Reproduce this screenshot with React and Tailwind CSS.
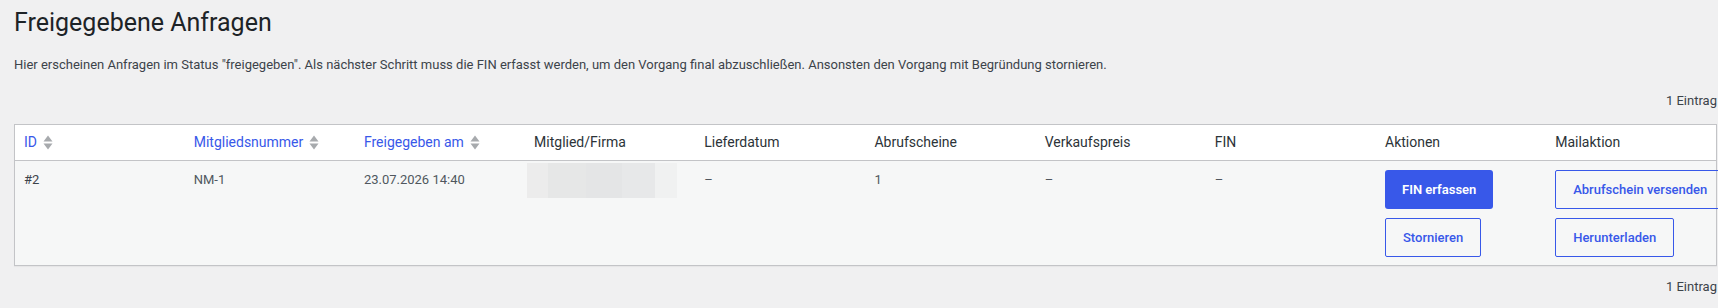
import React from 'react';

const font = { fontFamily: 'Roboto, "Noto Sans", Arial, sans-serif' };

function SortIcon() {
    return (
        <svg width="10" height="18" viewBox="0 0 10 18" className="ml-[6px] shrink-0">
            <polygon points="5,1.5 9.5,7.5 0.5,7.5" fill="#a7aaad" />
            <polygon points="0.5,9.5 9.5,9.5 5,15.5" fill="#a7aaad" />
        </svg>
    );
}

const columns = [
    { label: 'ID', sortable: true },
    { label: 'Mitgliedsnummer', sortable: true },
    { label: 'Freigegeben am', sortable: true },
    { label: 'Mitglied/Firma' },
    { label: 'Lieferdatum' },
    { label: 'Abrufscheine' },
    { label: 'Verkaufspreis' },
    { label: 'FIN' },
    { label: 'Aktionen' },
    { label: 'Mailaktion' },
];

function Blurred() {
    return (
        <div className="flex h-[35px] w-[150px] -ml-[7px] -mt-[7px]">
            <div className="w-[21px] bg-[#ececec]" />
            <div className="w-[38px] bg-[#e6e7e7]" />
            <div className="w-[36px] bg-[#e4e5e6]" />
            <div className="w-[33px] bg-[#e7e8e9]" />
            <div className="w-[22px] bg-[#f0f1f1]" />
        </div>
    );
}

function PrimaryButton({ children }) {
    return (
        <button className="inline-flex h-[39px] items-center whitespace-nowrap rounded-[3px] bg-[#3858e9] px-[17px] text-[13px] font-semibold text-white">
            {children}
        </button>
    );
}

function OutlineButton({ children }) {
    return (
        <button className="inline-flex h-[39px] items-center whitespace-nowrap rounded-[2px] border border-[#3858e9] bg-transparent px-[17px] text-[13px] font-medium text-[#3858e9]">
            {children}
        </button>
    );
}

export default function App() {
    return (
        <div className="min-h-[308px] overflow-hidden bg-[#f0f0f1] pl-[14px] pr-[1px] pt-[8px] text-[#3c434a]" style={font}>
            <h1 className="text-[25px] font-normal leading-[29px] text-[#1d2327]">Freigegebene Anfragen</h1>
            <p className="mt-[18px] text-[13px] leading-[20px] text-[#3c434a]">
                Hier erscheinen Anfragen im Status "freigegeben". Als nächster Schritt muss die FIN erfasst werden, um den Vorgang final abzuschließen. Ansonsten den Vorgang mit Begründung stornieren.
            </p>
            <div className="mt-[16px] text-right text-[13px] leading-[20px] text-[#3c434a]">1 Eintrag</div>

            <table className="mt-[13px] w-full table-fixed border-collapse border border-[#c3c4c7] shadow-[0_1px_1px_rgba(0,0,0,0.04)]">
                <thead>
                    <tr className="h-[36px] border-b border-[#c3c4c7] bg-white">
                        {columns.map((col) => (
                            <th key={col.label} className="px-[9px] text-left align-middle text-[14px] font-normal">
                                {col.sortable ? (
                                    <span className="inline-flex items-center text-[#3858e9]">
                                        {col.label}
                                        <SortIcon />
                                    </span>
                                ) : (
                                    <span className="text-[#2c3338]">{col.label}</span>
                                )}
                            </th>
                        ))}
                    </tr>
                </thead>
                <tbody>
                    <tr className="bg-[#f6f7f7] align-top text-[13px] leading-[19px] text-[#50575e]">
                        <td className="px-[9px] pb-[8px] pt-[9px] text-[#3c434a]">#2</td>
                        <td className="px-[9px] pb-[8px] pt-[9px]">NM-1</td>
                        <td className="px-[9px] pb-[8px] pt-[9px]">23.07.2026 14:40</td>
                        <td className="px-[9px] pb-[8px] pt-[9px]">
                            <Blurred />
                        </td>
                        <td className="px-[9px] pb-[8px] pt-[9px]">–</td>
                        <td className="px-[9px] pb-[8px] pt-[9px]">1</td>
                        <td className="px-[9px] pb-[8px] pt-[9px]">–</td>
                        <td className="px-[9px] pb-[8px] pt-[9px]">–</td>
                        <td className="px-[9px] pb-[8px] pt-[9px]">
                            <div className="flex flex-col items-start gap-[9px]">
                                <PrimaryButton>FIN erfassen</PrimaryButton>
                                <OutlineButton>Stornieren</OutlineButton>
                            </div>
                        </td>
                        <td className="px-[9px] pb-[8px] pt-[9px]">
                            <div className="flex flex-col items-start gap-[9px]">
                                <OutlineButton>Abrufschein versenden</OutlineButton>
                                <OutlineButton>Herunterladen</OutlineButton>
                            </div>
                        </td>
                    </tr>
                </tbody>
            </table>

            <div className="mt-[11px] text-right text-[13px] leading-[20px] text-[#3c434a]">1 Eintrag</div>
        </div>
    );
}
